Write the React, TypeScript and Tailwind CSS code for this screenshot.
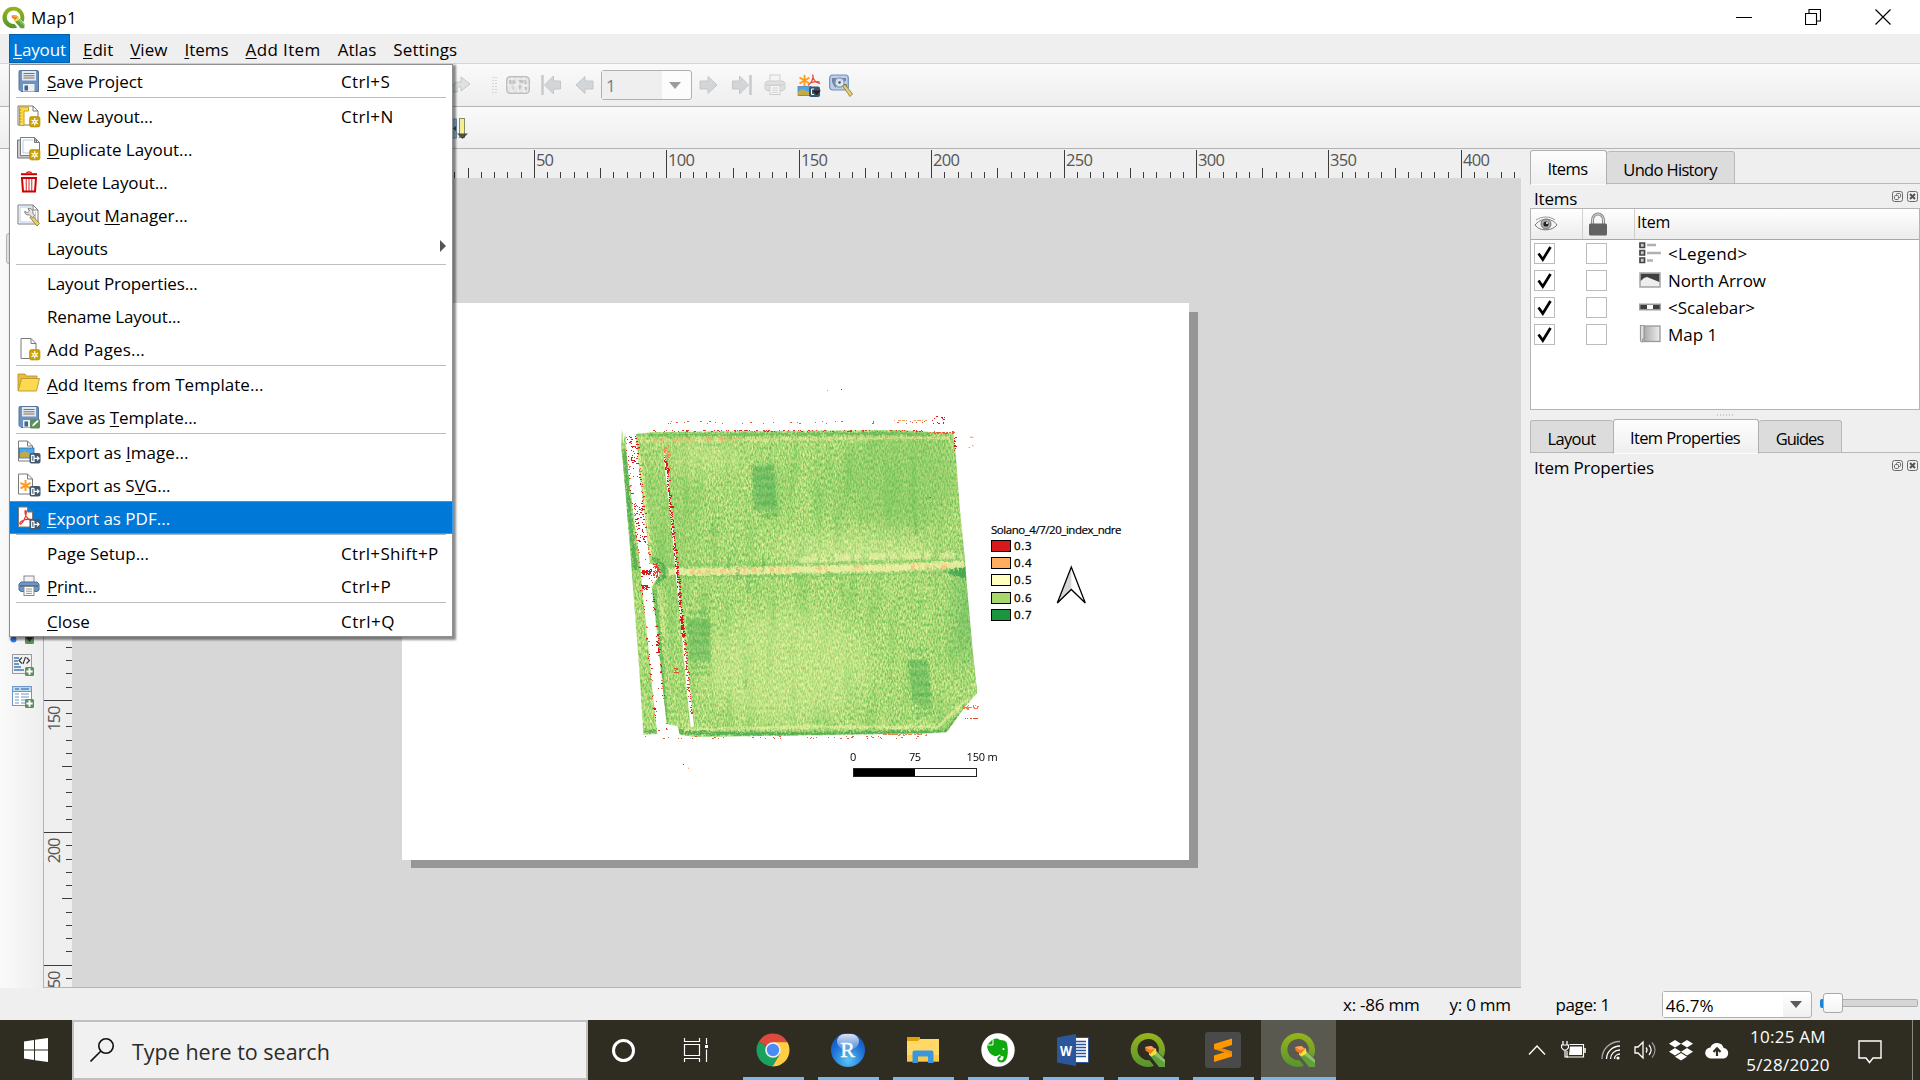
import React, { useLayoutEffect, useRef, useState } from "react";

/* ---------- text helpers ---------- */

/** Text tracked so that it spans `w` pixels. An ampersand marks the mnemonic letter. */
function Label({ t, w, className = "" }: { t: string; w: number; className?: string }) {
  const ref = useRef<HTMLSpanElement>(null);
  const [ls, setLs] = useState(0);
  useLayoutEffect(() => {
    if (ref.current) {
      const n = t.replace("&", "").length;
      setLs((w - ref.current.offsetWidth) / n);
    }
  }, [t, w]);
  const i = t.indexOf("&");
  return (
    <span ref={ref} className={"inline-block whitespace-pre " + className} style={{ letterSpacing: ls + "px" }}>
      {i < 0 ? (
        t
      ) : (
        <>
          {t.slice(0, i)}
          <span className="underline decoration-1 underline-offset-[2px]">{t[i + 1]}</span>
          {t.slice(i + 2)}
        </>
      )}
    </span>
  );
}

function rng(seed: number) {
  let s = seed;
  return () => {
    s = (s * 1664525 + 1013904223) % 4294967296;
    return s / 4294967296;
  };
}

/* ---------- icons ---------- */

type Kid = { children?: React.ReactNode; w?: number; h?: number; vb?: string; className?: string };
const Svg = ({ children, w = 24, h = 24, vb, className = "" }: Kid) => (
  <svg width={w} height={h} viewBox={vb ?? `0 0 ${w} ${h}`} className={"block shrink-0 " + className} fill="none">
    {children}
  </svg>
);

const NewBadge = () => (
  <g>
    <rect x="12.500" y="12.500" width="10.500" height="10.500" rx="2" fill="#c9a20a" stroke="#b08d00" strokeWidth=".6" />
    <path d="M17.700 14v7.600M14.500 15.900l6.500 3.800M21 15.900l-6.500 3.800" stroke="#fff" strokeWidth="1.200" />
    <circle cx="17.700" cy="17.800" r="1.900" fill="#fff" />
    <circle cx="17.700" cy="17.800" r=".7" fill="#c9a20a" />
  </g>
);
const ExportBadge = () => (
  <g>
    <rect x="12.500" y="13" width="11" height="10.500" rx="2" fill="#415a70" />
    <path d="M17 15.300h-2.300v6H17V15.300M17 18.300h5M20 16.300l2 2-2 2" stroke="#fff" strokeWidth="1.200" />
  </g>
);
const Sheet = ({ x = 1, y = 2, w = 20, h = 19 }: { x?: number; y?: number; w?: number; h?: number }) => (
  <path
    d={`M${x} ${y}h${w - 5}l5 5v${h - 5}h-${w}zM${x + w - 5} ${y}v5h5`}
    fill="#fff"
    stroke="#7a7a7a"
    strokeWidth="1"
  />
);
const Floppy = () => (
  <g>
    <path d="M3 1.500h17a1.500 1.500 0 0 1 1.500 1.500v19.500H4L2 20.500V2.500a1 1 0 0 1 1-1z" fill="#6d92c0" stroke="#53759f" />
    <rect x="5" y="2" width="14" height="9.500" fill="#e9e9e9" />
    <path d="M6.500 4.500h11M6.500 6.800h11M6.500 9h11" stroke="#666" strokeWidth=".9" />
    <rect x="6" y="15" width="11.500" height="7.500" fill="#eee" />
    <rect x="7.500" y="16.500" width="3.500" height="5" fill="#3d6396" />
  </g>
);
const Printer = ({ dim = false }: { dim?: boolean }) => (
  <g opacity={dim ? 0.35 : 1}>
    <rect x="7" y="2" width="10" height="7" fill="#f4f4f4" stroke="#888" />
    <path d="M4 8h16l2 2v6l-2 1.500H4L2 16v-6z" fill={dim ? "#bbb" : "#6d97c6"} stroke={dim ? "#888" : "#4b6f99"} />
    <path d="M3 12h18" stroke={dim ? "#999" : "#4f6680"} strokeWidth="1.500" />
    <rect x="7" y="12.500" width="10" height="9" fill="#fff" stroke="#888" />
    <path d="M9 15h6M9 17.200h6M9 19.400h6" stroke="#888" strokeWidth=".9" />
  </g>
);
const Wrench = () => (
  <g>
    <path d="M15 12l7.500 8.500-2.500 2.500-7-8.500z" fill="#e6cf72" stroke="#82712b" strokeWidth=".8" />
    <path
      d="M11 5.500c3-.8 5.500 1.500 4.800 4.500l2 2.800-2.500 2-2.800-3c-3 .8-5-1-4.700-3.500l2.700 1.500 2-1.800z"
      fill="#e4e4e4"
      stroke="#666"
      strokeWidth=".8"
    />
  </g>
);
const Pdf = () => (
  <path d="M8 5c.5-1 1.600-.5 1.400 1.500C9 11 6 17 3.800 18c-1.500.5-1.300-1.500.7-2.700 3-1.800 7-2.500 9.800-1.900 2 .6.800 1.900-.8 1.200C10.500 13.200 7.500 9 8 5z" stroke="#e2382c" strokeWidth="1.200" />
);

const menuIcon: Record<string, React.ReactNode> = {
  save: <Floppy />,
  new: (
    <g>
      <Sheet />
      <path d="M2.500 3h9v4h-4.500v14.500H2.500z" fill="#fcd94e" stroke="#c9a20a" />
      <path d="M2.500 9h2M2.500 12h2M2.500 15h2M2.500 18h2M2.500 6h2" stroke="#a58200" strokeWidth=".8" />
      <NewBadge />
    </g>
  ),
  dup: (
    <g>
      <path d="M.5 3v18h19V3z" fill="#c9c9c9" stroke="#777" />
      <Sheet x={3.5} y={0.5} w={19} h={18} />
      <path d="M6 3v13h14M6 3h10" stroke="#b9cbe8" />
      <NewBadge />
    </g>
  ),
  del: (
    <g stroke="#cf0000" strokeWidth="1.600">
      <path d="M4 4.200h16" strokeWidth="2" />
      <path d="M9.500 3c.5-1.500 4.500-1.500 5 0" strokeWidth="1.200" />
      <path d="M5 8h14l-1 13.500H6z" fill="#fff" strokeWidth="2" />
      <path d="M9.300 9v12M12 9v12M14.700 9v12" strokeWidth="1.300" opacity=".65" />
    </g>
  ),
  mgr: (
    <g>
      <Sheet />
      <path d="M3 4h12.500M3 4v15h14M18.500 9v10" stroke="#b9cbe8" />
      <Wrench />
    </g>
  ),
  pages: (
    <g>
      <Sheet x={4} y={1.5} w={15} h={20} />
      <NewBadge />
    </g>
  ),
  folder: (
    <g stroke="#b99732" strokeWidth=".9">
      <path d="M1 18.500V2h7l1.500 2H20v4" fill="#e9bb3a" />
      <path d="M4.500 6.500h18l-3 12.500H1.200z" fill="#fcd94e" />
    </g>
  ),
  savet: (
    <g>
      <Floppy />
      <rect x="13" y="14" width="10" height="9.500" rx="1.500" fill="#5b8f5c" />
      <path d="M15 21.500l1-2.500 4.500-4 1.200 1.200-4.400 4.300z" fill="#fff" />
    </g>
  ),
  img: (
    <g>
      <Sheet x={1.5} y={1} w={14} h={20} />
      <rect x="2.500" y="8" width="14.500" height="10" fill="#4aa8e8" stroke="#3b6a98" strokeWidth=".8" />
      <path d="M3 17.500v-4l4.500-2.500 9 4v2.500z" fill="#c2ab47" />
      <ExportBadge />
    </g>
  ),
  svg: (
    <g>
      <Sheet x={1.5} y={1} w={14} h={20} />
      <path d="M8.500 7v11M3.500 9.800l10 5.500M13.500 9.800L3.500 15.300" stroke="#ff9a1c" strokeWidth="1.900" />
      <ExportBadge />
    </g>
  ),
  pdf: (
    <g>
      <Sheet x={1.5} y={1} w={14} h={20} />
      <Pdf />
      <ExportBadge />
    </g>
  ),
  print: <Printer />,
};

function Qgis({ s }: { s: number }) {
  return (
    <Svg w={s} h={s} vb="0 0 36 36">
      <defs>
        <linearGradient id="qg" x1="0" y1="0" x2="0" y2="1">
          <stop offset="0" stopColor="#97b51c" />
          <stop offset="1" stopColor="#57932f" />
        </linearGradient>
      </defs>
      <path d="M18 1A17 17 0 1 0 24 33.800L19.500 28.200A10.700 10.700 0 1 1 28.400 20.500L33.300 25.500A17 17 0 0 0 18 1z" fill="url(#qg)" />
      <path d="M19 22.500l5.500-5L35 28v7h-6z" fill="#62a03a" />
      <path d="M24.500 17.500L35 28v3L21 20.500z" fill="#8cc069" />
      <path d="M19 17v5.500l2.500 2 5-3-.5-5z" fill="#f7e13d" />
      <path d="M15 15l6.500-1 3.500 3-4.500 5-5-3.500z" fill="#ef7a22" />
      <path d="M15 15l6.500-1 3.500 3-5 1z" fill="#f9a65a" />
    </Svg>
  );
}

/* ---------- menu ---------- */

type Row = { t: string; w: number; i?: string; k?: string; kw?: number; sep?: boolean; on?: boolean; sub?: boolean };
const rows: Row[] = [
  { t: "&Save Project", w: 96, i: "save", k: "Ctrl+S", kw: 49, sep: true },
  { t: "New Layout...", w: 106, i: "new", k: "Ctrl+N", kw: 53 },
  { t: "&Duplicate Layout...", w: 145, i: "dup" },
  { t: "Delete Layout...", w: 121, i: "del" },
  { t: "Layout &Manager...", w: 141, i: "mgr" },
  { t: "Layouts", w: 61, sub: true, sep: true },
  { t: "Layout Properties...", w: 151 },
  { t: "Rename Layout...", w: 134 },
  { t: "Add Pages...", w: 98, i: "pages", sep: true },
  { t: "&Add Items from Template...", w: 216, i: "folder" },
  { t: "Save as &Template...", w: 150, i: "savet", sep: true },
  { t: "Export as &Image...", w: 141, i: "img" },
  { t: "Export as S&VG...", w: 124, i: "svg" },
  { t: "&Export as PDF...", w: 123, i: "pdf", on: true, sep: true },
  { t: "Pa&ge Setup...", w: 102, k: "Ctrl+Shift+P", kw: 98 },
  { t: "&Print...", w: 49, i: "print", k: "Ctrl+P", kw: 50, sep: true },
  { t: "&Close", w: 43, k: "Ctrl+Q", kw: 54 },
];

function Menu() {
  return (
    <div className="absolute left-[9px] top-[64px] z-20 w-[444px] bg-white shadow-[inset_0_0_0_1px_#8f8f8f,2px_2px_2px_1px_rgba(0,0,0,0.45)]">
      {rows.map((r) => (
        <React.Fragment key={r.t}>
          <div
            className={
              "flex h-[33px] items-center pl-[8px] " + (r.on ? "bg-[#0078d7] text-white shadow-[inset_0_0_0_1px_#3399ea]" : "text-black")
            }
          >
            <div className="w-6 shrink-0 pt-px">{r.i && <Svg>{menuIcon[r.i]}</Svg>}</div>
            <div className="w-[294px] shrink-0 pl-[6px] pt-[3px]">
              <Label t={r.t} w={r.w} />
            </div>
            <div className="w-[104px] shrink-0 pl-[6px] pt-[3px]">{r.k && <Label t={r.k} w={r.kw!} />}</div>
            {r.sub && (
              <Svg w={6} h={12} className="ml-px -mt-1">
                <path d="M0 0l6 6-6 6z" fill="#555" />
              </Svg>
            )}
          </div>
          {r.sep && <div className={"mx-[7px] mb-px h-px " + (r.on ? "bg-[#a9b7c4]" : "bg-[#bdbdbd]")} />}
        </React.Fragment>
      ))}
    </div>
  );
}

const menuBar: [string, number][] = [
  ["&Edit", 30],
  ["&View", 37],
  ["&Items", 44],
  ["&Add Item", 75],
  ["Atlas", 39],
  ["Settings", 64],
];

/* ---------- toolbars ---------- */

const Arrow = ({ flip = false, bar = false }: { flip?: boolean; bar?: boolean }) => (
  <Svg w={20} h={20} className={flip ? "-scale-x-100" : ""}>
    <path d={bar ? "M.5 6h7V1l9 9-9 9v-5h-7z" : "M1 6h8V1.500l9 8.500-9 8.500V14H1z"} fill="#d2d6d8" stroke="#c3c7c9" />
    {bar && <path d="M18.500 0v20" stroke="#c6cacc" strokeWidth="2.500" />}
  </Svg>
);

function Toolbars() {
  return (
    <>
      <div className="flex h-[43px] items-center border-b border-[#b4b4b4] bg-linear-to-b from-[#fafafa] to-[#eeeeee] pl-[452px]">
        <Svg w={20} h={20}>
          <path d="M1 17c-2-6 1-11 8-10V2l9 7-9 7v-4c-4-1-5 1-3 5z" fill="#dfe3df" stroke="#c5c9c5" />
        </Svg>
        <Svg w={5} h={17} className="ml-[20px] mr-[9px]">
          <path d="M1 0v17M4 0v17" stroke="#b5b5b5" strokeDasharray="1 2" />
        </Svg>
        <Svg w={24} h={18}>
          <rect x=".7" y=".7" width="22.600" height="16.600" rx="3.500" fill="#e6e6e6" stroke="#bdbdbd" strokeWidth="1.400" />
          <path d="M3 4h5l2 2-3 3 1 5-2-1-1-4-2-2zM12 4l8 0 1 4-3 1-1-2-3 0zM12 8l4 1-2 5-2-3zM18 11l3 0v3h-2z" fill="#c2c2c2" />
          <path d="M6 1v16M12 1v16M18 1v16M1 9h22" stroke="#fff" strokeWidth=".6" />
        </Svg>
        <div className="ml-[11px]"><Arrow flip bar /></div>
        <div className="ml-[13px]"><Arrow flip /></div>
        <div className="ml-[7px] flex h-[30px] w-[91px] items-center rounded-[3px] border border-[#b0b0b0] bg-[#fcfcfc]">
          <div className="flex h-full w-[60px] items-center bg-[#efefef] pl-[4px] pt-[2px] text-[#6f7d8c]">1</div>
          <Svg w={12} h={7} className="ml-[7px]">
            <path d="M0 0h12l-6 7z" fill="#9c9c9c" />
          </Svg>
        </div>
        <div className="ml-[7px]"><Arrow /></div>
        <div className="ml-[13px]"><Arrow bar /></div>
        <Svg className="ml-[11px]"><Printer dim /></Svg>
        <Svg className="ml-[10px] mt-[2px]" w={24} h={24}>
          <path d="M7.500 1v11M2.500 3.500l10 6M12.500 3.500l-10 6" stroke="#ff9a1c" strokeWidth="1.800" />
          <path d="M15 1.500c.8-.8 1.300 0 1 1.500-.5 3-3 7-5 8.500M16 3c.5 3 3 5.500 7 6.500M12.500 9.500c2.500-1.500 6-2.200 10-1.500" stroke="#ee4a38" strokeWidth="1.300" />
          <rect x="1" y="12.500" width="13" height="9" fill="#4aa8e8" stroke="#3b6a98" strokeWidth=".6" />
          <path d="M1 21v-3.500l4-2.500 9 4v2z" fill="#c2ab47" />
          <rect x="12" y="12.500" width="11" height="10.500" rx="2" fill="#3b556d" />
          <path d="M17 15h-2.500v5.500H17" stroke="#fff" />
          <path d="M15.500 16.500h8.500L19.700 21z" fill="#222" />
        </Svg>
        <Svg className="ml-[8px] mt-[2px]" w={24} h={24}>
          <rect x=".7" y="1" width="18.600" height="15" rx="3" fill="#bcd0ea" stroke="#6f8fbb" strokeWidth="1.200" />
          <path d="M3 4h4l2 2-2 4 0 4-2-2-2-4zM10 4h7v3l-3 0-3 1zM14 10l4 0v3l-2 1z" fill="#6f86a6" />
          <circle cx="10.500" cy="8.500" r="4.600" fill="#e6eef8" fillOpacity=".8" stroke="#8b96a6" strokeWidth="1.200" />
          <circle cx="10.500" cy="8.500" r="1.300" fill="#456" />
          <path d="M13.700 12l2.300-1.500 7.500 9.500-2.500 2.500z" fill="#e6cf72" stroke="#82712b" strokeWidth=".8" />
        </Svg>
      </div>
      <div className="flex h-[42px] items-center border-b border-[#b4b4b4] bg-linear-to-b from-[#fafafa] to-[#eeeeee] pl-[452px]">
        <Svg w={18} h={22} className="mt-[2px]">
          <rect x="-2" y="1" width="6.500" height="19" fill="#9dbdd6" stroke="#6d96b8" />
          <path d="M4 8l-3 2.500L4 13z" fill="#444" />
          <rect x="7.500" y=".5" width="5" height="19" fill="#f3ee8e" stroke="#8a8a6a" />
          <path d="M5 15.500h11l-5.500 5.500z" fill="#333" fillOpacity=".85" />
        </Svg>
      </div>
    </>
  );
}

/* ---------- rulers ---------- */

const MM = 2.6485;

function TopRuler() {
  const ticks: React.ReactNode[] = [];
  for (let mm = 0; mm <= 420; mm += 5) {
    const x = Math.floor(402 + mm * MM) + 0.5 - 72;
    const top = mm % 50 === 0 ? 1 : mm % 25 === 0 ? 19 : 23;
    ticks.push(<path key={mm} d={`M${x} ${top}V29`} stroke="#3c3c3c" />);
    if (mm % 50 === 0)
      ticks.push(
        <text key={"t" + mm} x={x + 1.5} y="17" fontSize="16.500" textLength={String(mm).length * 9} fill="#555">
          {mm}
        </text>
      );
  }
  return <Svg w={1449} h={29}>{ticks}</Svg>;
}

function SideRuler() {
  const ticks: React.ReactNode[] = [];
  for (let mm = 0; mm <= 255; mm += 5) {
    const y = Math.floor(303 + mm * MM) + 0.5 - 178;
    const left = mm % 50 === 0 ? 0 : mm % 25 === 0 ? 18 : 22;
    ticks.push(<path key={mm} d={`M${left} ${y}H28`} stroke="#3c3c3c" />);
    if (mm % 50 === 0) {
      const l = String(mm).length * 8.6;
      ticks.push(
        <text key={"t" + mm} transform={`translate(16 ${y + 5 + l}) rotate(-90)`} fontSize="16.500" textLength={l} fill="#555">
          {mm}
        </text>
      );
    }
  }
  return <Svg w={28} h={809}>{ticks}</Svg>;
}

/* ---------- map ---------- */

function speckle(seed: number, n: number, at: (r: () => number) => [number, number]) {
  const r = rng(seed);
  let d = "";
  for (let i = 0; i < n; i++) {
    const [x, y] = at(r);
    const w = r() < 0.3 ? 6 : 3;
    d += `M${Math.round(x / 3) * 3} ${Math.round(y / 3) * 3}h${w}v3h-${w}z`;
  }
  return d;
}

const road = (r: () => number, y0: number, y1: number): [number, number] => {
  const y = y0 + r() * (y1 - y0);
  const left = 78 + (y - 190) * 0.105;
  return [left + r() * 28, y];
};
const lane = (r: () => number, y0: number, y1: number, s = 9): [number, number] => {
  const y = y0 + r() * (y1 - y0);
  return [188 + (y - 230) * 0.1 + r() * s, y];
};
const edge = (r: () => number): [number, number] => {
  const y = 200 + r() * 880;
  return [(r() < 0.5 ? 72 : 104) + (y - 190) * 0.105 + r() * 6, y];
};

function FieldMap() {
  const main =
    "M108 192L160 186L480 183L900 180L990 186L1060 190L1066 240L1080 420L1094 560L1100 640L1118 840L1132 968L1095 1010L1040 1086L980 1090L620 1096L285 1101L240 1094L232 1068L200 1062L186 930L170 780L155 650L178 615L176 590L150 580L135 440L118 300Z";
  const strip = "M66 178L70 215L76 192L84 300L100 430L112 520L122 600L130 690L146 840L160 990L172 1092L130 1094L118 900L104 720L92 560L74 340L63 225Z";
  return (
    <Svg w={400} h={420} vb="0 0 1200 1260" className="absolute left-[198px] top-[67px]">
      <defs>
        <clipPath id="field">
          <path d={main} />
          <path d={strip} />
        </clipPath>
        <filter id="crop" x="0" y="0" width="100%" height="100%" colorInterpolationFilters="sRGB">
          <feTurbulence type="fractalNoise" baseFrequency="0.22 0.1" numOctaves="2" seed="7" />
          <feColorMatrix values="1 0 0 0 0  1 0 0 0 0  1 0 0 0 0  0 0 0 0 1" />
          <feComponentTransfer>
            <feFuncR type="table" tableValues="0.25 0.36 0.47 0.56 0.68 0.78 0.87 0.96 1" />
            <feFuncG type="table" tableValues="0.65 0.71 0.76 0.81 0.86 0.9 0.94 0.98 1" />
            <feFuncB type="table" tableValues="0.33 0.36 0.38 0.4 0.46 0.54 0.62 0.7 0.75" />
          </feComponentTransfer>
        </filter>
        <filter id="broad" x="0" y="0" width="100%" height="100%" colorInterpolationFilters="sRGB">
          <feTurbulence type="fractalNoise" baseFrequency="0.03 0.004" numOctaves="3" seed="21" />
          <feColorMatrix values="0 0 0 0 0.38  0 0 0 0 0.74  0 0 0 0 0.33  2 0 0 0 -0.95" />
        </filter>
        <filter id="rough" x="-10%" y="-10%" width="120%" height="120%">
          <feTurbulence type="fractalNoise" baseFrequency="0.14" numOctaves="2" seed="3" result="n" />
          <feDisplacementMap in="SourceGraphic" in2="n" scale="20" xChannelSelector="R" yChannelSelector="G" />
        </filter>
        <filter id="soft" x="-60%" y="-60%" width="220%" height="220%">
          <feGaussianBlur stdDeviation="34" />
        </filter>
      </defs>
      <g clipPath="url(#field)">
        <rect x="50" y="170" width="1100" height="940" filter="url(#crop)" />
        <rect x="50" y="170" width="1100" height="940" filter="url(#broad)" opacity=".5" />
        <g filter="url(#soft)">
          <ellipse cx="560" cy="890" rx="250" ry="170" fill="#f2f7a8" opacity=".3" />
          <ellipse cx="760" cy="540" rx="260" ry="35" fill="#f6f8b0" opacity=".4" />
          <ellipse cx="900" cy="330" rx="190" ry="150" fill="#6bbd56" opacity=".35" />
          <ellipse cx="200" cy="480" rx="90" ry="200" fill="#7cc45c" opacity=".3" />
          <ellipse cx="1110" cy="700" rx="40" ry="190" fill="#3ba64e" opacity=".45" />
          <ellipse cx="320" cy="260" rx="110" ry="50" fill="#e8f3a0" opacity=".3" />
        </g>
        <g filter="url(#rough)">
          <path d="M150 195L900 190L990 196" stroke="#5fb455" strokeWidth="7" opacity=".8" />
          <path d="M120 212L440 208L1050 202" stroke="#f6e59c" strokeWidth="6" opacity=".75" />
          <path d="M160 211L440 207" stroke="#f2a45e" strokeWidth="4" strokeDasharray="40 14 70 20" opacity=".8" />
          <path d="M190 586L700 580L1090 568" stroke="#69b957" strokeWidth="5" opacity=".55" />
          <path d="M205 606L560 600L860 594L1092 582" stroke="#fbf3ae" strokeWidth="20" opacity=".75" />
          <path d="M600 572L800 558L1090 558" stroke="#f8f5b0" strokeWidth="20" strokeDasharray="50 12 20 22" opacity=".5" />
          <path d="M270 606L480 600M510 599L580 598M650 596L690 595M760 593L790 592M930 592L1040 589" stroke="#f9b672" strokeWidth="12" strokeDasharray="15 9 8 14" opacity=".7" />
          <path d="M180 620L600 618L1000 608L1098 598" stroke="#5fb455" strokeWidth="5" opacity=".55" />
          <path d="M1040 606L1100 590L1104 630z" fill="#2f9c49" opacity=".7" />
          <path d="M245 1089L620 1092L1035 1086L1132 981" stroke="#3fa54c" strokeWidth="10" opacity=".8" />
          <path d="M250 1078L640 1071L1010 1071L1100 990" stroke="#f4f2a6" strokeWidth="8" opacity=".65" />
          <path d="M73 240L93 480L107 600" stroke="#37a04b" strokeWidth="13" opacity=".65" />
          <path d="M117 250L135 400L153 560" stroke="#f5f0a6" strokeWidth="8" opacity=".8" />
          <path d="M163 660L181 820L199 1050" stroke="#5cb155" strokeWidth="9" opacity=".8" />
          <path d="M179 660L193 800" stroke="#ecef9f" strokeWidth="5" opacity=".7" />
          <path d="M155 560L188 585L193 620L168 640" stroke="#37a04b" strokeWidth="9" opacity=".7" />
          <path d="M130 1084H172M243 1074L239 1096" stroke="#37a04b" strokeWidth="9" opacity=".7" />
          <path d="M386 540V600M445 610V670M414 590V630M490 560V610M947 440V490M782 430V460M435 930V950M338 460V500M684 600V630" stroke="#3fa54c" strokeWidth="5" opacity=".5" />
        </g>
        <g filter="url(#rough)" fill="#4bab52" stroke="#4bab52">
          <path d="M455 288L521 284L529 420L461 422Z" opacity=".45" />
          <path d="M460 300L522 296M462 325L524 322M464 350L526 347M466 376L528 373M468 400L528 398" strokeWidth="9" opacity=".4" />
          <path d="M477 438L531 434" strokeWidth="9" opacity=".5" />
          <path d="M259 746L331 744L333 876L269 878Z" opacity=".4" />
          <path d="M262 765H330M264 790H330M266 815H330M268 850H330" strokeWidth="9" opacity=".35" />
          <path d="M265 726H321M273 892L333 890M277 911L331 909" strokeWidth="8" opacity=".4" />
          <path d="M925 870L983 868L995 1006L939 1002Z" opacity=".42" />
          <path d="M928 885L985 882M932 915L988 912M936 945L990 942M938 975L994 972" strokeWidth="9" opacity=".4" />
          <path d="M921 844L981 840M947 1016L999 1012M943 1032L1003 1030" strokeWidth="8" opacity=".42" />
        </g>
      </g>
      <path d="M190 232L202 300L232 600L248 780L260 860L282 1070H272L260 960L246 800L226 600L212 440L196 310Z" fill="#fff" />
      <path d={speckle(5, 60, (r) => lane(r, 225, 300, 18))} fill="#f08a50" />
      <path d={speckle(11, 260, (r) => lane(r, 260, 800, 9))} fill="#d7191c" />
      <path d={speckle(13, 60, (r) => lane(r, 740, 800, 7))} fill="#d7191c" />
      <path d={speckle(14, 70, (r) => lane(r, 800, 1050, 10))} fill="#da3a2c" />
      <path d={speckle(21, 34, (r) => road(r, 190, 300))} fill="#d7191c" />
      <path d={speckle(22, 55, (r) => road(r, 400, 520))} fill="#d7191c" />
      <path d={speckle(23, 25, (r) => road(r, 190, 1080))} fill="#dd4030" />
      <path d={speckle(24, 110, edge)} fill="#ee7040" />
      <path d={speckle(25, 80, edge)} fill="#d7191c" />
      <path d={speckle(26, 50, (r) => [124 + r() * 26, 598 + r() * 14])} fill="#d7191c" />
      <path d={speckle(27, 50, (r) => [158 + r() * 18, 580 + r() * 42])} fill="#e0402c" />
      <path d={speckle(28, 34, (r) => [122 + r() * 20, 644 + r() * 12])} fill="#d7191c" />
      <path d={speckle(29, 30, (r) => [166 + r() * 8 + 2, 790 + r() * 60])} fill="#d7191c" />
      <path d={speckle(30, 90, (r) => [150 + r() * 830, 179 + r() * 4])} fill="#dc3a28" />
      <path d={speckle(31, 34, (r) => [110 + r() * 870, 152 + r() * 8])} fill="#e5603c" />
      <path d={speckle(32, 20, (r) => [880 + r() * 100, 150])} fill="#f3a060" />
      <path d={speckle(33, 12, (r) => [990 + r() * 44, 136 + r() * 26])} fill="#d7191c" />
      <path d={speckle(34, 34, (r) => [990 + r() * 70, 184 + r() * 5])} fill="#e5603c" />
      <path d={speckle(35, 44, (r) => [130 + r() * 850, 1097 + r() * 8])} fill="#e5603c" />
      <path d={speckle(36, 50, (r) => [850 + r() * 130, 1090 + r() * 4])} fill="#e88a50" />
      <path d={speckle(37, 34, (r) => [1085 + r() * 46, 1004 + r() * 14])} fill="#f08048" />
      <path d={speckle(38, 18, (r) => [1092 + r() * 40, 1044])} fill="#e2512f" />
      <path d={speckle(39, 16, (r) => [1062 + r() * 4, 200 + r() * 50])} fill="#d7191c" />
      <path d={speckle(40, 14, (r) => [220 + r() * 12, 892 + r() * 16])} fill="#e2512f" />
      <path d="M681 60h3v3h-3zM1110 200h10v3h-10zM1106 231h4v3h-4zM1116 226h5v3h-5zM264 1193h3v3h-3z" fill="#f0955c" />
      <path d="M723 57h3v3h-3zM249 1182h3v3h-3zM990 381h3v3h-3z" fill="#d7191c" />
    </Svg>
  );
}

const legend: [string, string][] = [
  ["0.3", "bg-[#d7191c]"],
  ["0.4", "bg-[#fdae61]"],
  ["0.5", "bg-[#ffffc0]"],
  ["0.6", "bg-[#a6d96a]"],
  ["0.7", "bg-[#1a9641]"],
];

function Canvas() {
  return (
    <div className="relative h-[809px] w-[1449px] overflow-hidden bg-[#d7d7d7]">
      <div className="absolute left-[339px] top-[134px] h-[556px] w-[787px] bg-[#969696]" />
      <div className="absolute left-[330px] top-[125px] h-[557px] w-[787px] bg-white">
        <FieldMap />
        <div className="absolute left-[589px] top-[219px] text-[11.500px] leading-[16px] text-black">
          <Label t="Solano_4/7/20_index_ndre" w={130} className="[-webkit-text-stroke:0.2px_black]" />
          {legend.map(([t, c]) => (
            <div key={t} className="-mt-[0.500px] mb-[0.500px] flex h-[17.200px] items-center gap-[3px]">
              <div className={"h-[12px] w-[20px] border border-black " + c} />
              <Label t={t} w={18} className="[-webkit-text-stroke:0.3px_black]" />
            </div>
          ))}
        </div>
        <Svg w={34} h={44} className="absolute left-[652px] top-[260px]">
          <path d="M17.300 4L3.300 40L17.300 26.500z" fill="#d6d6d6" />
          <path d="M17.300 4L3.300 40L17.300 26.500L31.300 40z" stroke="#000" strokeWidth="1.300" />
        </Svg>
        <div className="absolute left-[451px] top-[446px] w-[150px] text-[11px] leading-[16px] text-black">
          <div className="flex">
            <span className="w-[5px] -ml-[3px] mr-[54px]">0</span>
            <Label t="75" w={12} />
            <Label t="150 m" w={31} className="ml-[46px]" />
          </div>
          <div className="mt-[3px] flex h-[9px] w-[124px] border border-[#222] bg-white">
            <div className="w-1/2 bg-black" />
          </div>
        </div>
      </div>
    </div>
  );
}

/* ---------- left tools ---------- */

const Plus = () => (
  <g>
    <rect x="13" y="13" width="9" height="9" rx="1.500" fill="#5b8f5c" />
    <path d="M17.500 14.300v6.400M14.300 17.500h6.400" stroke="#fff" strokeWidth="2" />
  </g>
);

function LeftTools() {
  return (
    <div className="relative h-[839px] w-[43px] bg-linear-to-r from-[#fafafa] to-[#eeeeee]">
      <div className="absolute left-[6px] top-[84px] h-[31px] w-[31px] rounded-[3px] border border-[#b0b0b0] bg-[#e2e2e2]" />
      <div className="flex flex-col pl-[12px] pt-[475px]">
        <Svg w={22} h={22} className="overflow-visible">
          <circle cx="1.500" cy="15.500" r="3" fill="#2a7fff" />
          <path d="M2 14l5-4" stroke="#555" />
          <rect x="13" y="11" width="9" height="9" rx="1.500" fill="#5b8f5c" />
          <path d="M13 12h9l-4.500 6z" fill="#333" />
        </Svg>
        <Svg w={22} h={22} className="mt-[8px]">
          <rect x=".5" y=".5" width="19" height="19" fill="#f1f1f1" stroke="#9a9a9a" />
          <path d="M2 4h5M2 7h4M2 10h5M2 13h7M2 16h10" stroke="#6d97c6" strokeWidth="2" />
          <path d="M10 3.500L7 6.500l3 3M14.500 3.500l3 3-3 3M13.500 3l-2.500 7" stroke="#333" strokeWidth="1.100" />
          <Plus />
        </Svg>
        <Svg w={22} h={22} className="mt-[10px]">
          <rect x=".5" y=".5" width="19" height="19" fill="#fff" stroke="#6d97c6" />
          <rect x="1" y="1" width="18" height="4.500" fill="#b9d9f0" />
          <path d="M3 3h4M9 3h8" stroke="#5a86b8" strokeWidth="1.500" />
          <path d="M1 5.500h18M3 8h4M9 8h8M3 11h4M9 11h8M3 14h4M9 14h5M3 17h4M9 17h4" stroke="#6d97c6" />
          <Plus />
        </Svg>
      </div>
    </div>
  );
}

/* ---------- right panel ---------- */

function Tab({ t, w, box, active = false }: { t: string; w: number; box: string; active?: boolean }) {
  return (
    <div
      className={
        "flex items-center justify-center rounded-t-[3px] border " +
        box +
        (active
          ? " h-[35px] border-[#b0b0b0] border-b-transparent bg-linear-to-b from-[#fdfdfd] to-[#efefef] pt-[3px] pr-[2px]"
          : " h-[33px] border-[#b8b8b8] bg-[#dcdcdc] pt-[5px] pr-px")
      }
    >
      <Label t={t} w={w} className="text-[16.500px]" />
    </div>
  );
}

function DockTitle({ t, w }: { t: string; w: number }) {
  return (
    <div className="flex h-[23px] items-center justify-between pl-[4px] pr-[2px]">
      <Label t={t} w={w} className="mt-[3px]" />
      <div className="-mt-[2px] flex gap-[4px]">
        <Svg w={11} h={11}>
          <rect x=".5" y=".5" width="10" height="10" rx="2" stroke="#6a6a6a" />
          <rect x="4.500" y="2.500" width="4" height="4" rx="1" stroke="#6a6a6a" />
          <rect x="2.500" y="4.500" width="4" height="4" rx="1" fill="#efefef" stroke="#6a6a6a" />
        </Svg>
        <Svg w={11} h={11}>
          <rect x=".5" y=".5" width="10" height="10" rx="2" stroke="#6a6a6a" />
          <path d="M3 3l5 5M8 3l-5 5" stroke="#555" strokeWidth="2" />
        </Svg>
      </div>
    </div>
  );
}

const Box = ({ on = false }: { on?: boolean }) => (
  <div className="h-[21px] w-[21px] border border-[#bcbcbc] bg-white">
    {on && (
      <Svg w={19} h={19}>
        <path d="M3.500 9.500l4.300 6L15.500 3" stroke="#000" strokeWidth="2.700" />
      </Svg>
    )}
  </div>
);

const items: [string, number, React.ReactNode][] = [
  [
    "<Legend>",
    79,
    <g>
      <path d="M8 3h9M8 11h14M8 18.500h6" stroke="#b0b0b0" strokeWidth="2.500" />
      <path d="M1 1h4.500v4.500H1zM1 8.500h4.500V13H1zM1 16h4.500v4.500H1z" fill="#ccc" stroke="#444" strokeWidth="1.700" />
    </g>,
  ],
  [
    "North Arrow",
    98,
    <g>
      <rect x="1" y="4" width="20" height="14" fill="#eee" stroke="#a5a5a5" strokeWidth="1.500" />
      <path d="M1.700 4.700h18.600v8.300L8 8l-3 1-3.300 3z" fill="#3f3f3f" />
    </g>,
  ],
  [
    "<Scalebar>",
    87,
    <g>
      <rect x=".7" y="8.200" width="20.600" height="5.600" fill="#3f3f3f" stroke="#a0a0a0" strokeWidth="1.400" />
      <path d="M8 9h6v4H8z" fill="#fff" />
    </g>,
  ],
  [
    "Map 1",
    49,
    <g>
      <defs>
        <linearGradient id="mp">
          <stop offset="0" stopColor="#aaa" />
          <stop offset="1" stopColor="#eee" />
        </linearGradient>
      </defs>
      <rect x="5" y="3" width="16" height="15.500" fill="url(#mp)" stroke="#999" strokeWidth="1.300" />
      <path d="M1.500 2.500h3.500v13c-2 0-2 3 0 3-3 1-3.500 0-3.500-2z" fill="#e2e2e2" stroke="#999" strokeWidth="1.200" />
    </g>,
  ],
];

function RightPanel() {
  return (
    <div className="w-[390px] text-black">
      <div className="flex h-[37px] items-end pt-[1px]">
        <Tab t="Items" w={40} box="w-[77px] mb-px" active />
        <Tab t="Undo History" w={93} box="w-[128px] mb-[2px] border-l-0" />
        <div className="mb-[2px] h-px flex-1 bg-[#b8b8b8]" />
      </div>
      <DockTitle t="Items" w={43} />
      <div className="-mt-px h-[202px] border border-[#b4b4b4] bg-white">
        <div className="flex h-[31px] border-b border-[#a8a8a8] bg-linear-to-b from-white to-[#ececec]">
          <div className="flex w-[52px] items-center border-r border-[#cfcfcf] pl-[3px]">
            <Svg w={24} h={18}>
              <path d="M1 10c5-7 17-8 22 0-5 6-17 7-22 0z" fill="#f4f4f4" stroke="#777" />
              <path d="M2 5C8 1 16 1 21 5" stroke="#999" />
              <circle cx="12" cy="9" r="5" fill="#aaa" stroke="#777" />
              <circle cx="12" cy="9" r="2.600" fill="#222" />
              <circle cx="13" cy="8" r="1" fill="#fff" />
            </Svg>
          </div>
          <div className="flex w-[52px] items-center border-r border-[#cfcfcf] pl-[5px]">
            <Svg w={20} h={24}>
              <path d="M4.500 12V8a5.500 6 0 0 1 11 0v4" stroke="#8c8c8c" strokeWidth="3" />
              <path d="M4.500 12V8a5.500 6 0 0 1 11 0v4" stroke="#ddd" strokeWidth="1" />
              <rect x="1" y="11.500" width="18" height="12" rx="1.500" fill="#636363" />
            </Svg>
          </div>
          <Label t="Item" w={33} className="ml-[2px] mt-px text-[16px]" />
        </div>
        <div>
          {items.map(([t, w, icon]) => (
            <div key={t} className="flex h-[27px] items-center pl-[3px]">
              <Box on />
              <div className="w-[31px]" />
              <Box />
              <Svg w={22} h={22} className="ml-[32px] mr-[7px] -mt-[2px]">{icon}</Svg>
              <Label t={t} w={w} className="pt-px" />
            </div>
          ))}
        </div>
      </div>
      <div className="flex h-[9px] items-center justify-center">
        <Svg w={17} h={2}>
          <path d="M0 1h17" stroke="#aaa" strokeDasharray="1 2" />
        </Svg>
      </div>
      <div className="flex h-[36px] items-end">
        <Tab t="Layout" w={48} box="w-[83px] mb-[2px] border-r-0" />
        <Tab t="Item Properties" w={110} box="w-[146px] mb-px" active />
        <Tab t="Guides" w={48} box="w-[83px] mb-[2px] border-l-0" />
        <div className="mb-[2px] h-px flex-1 bg-[#b8b8b8]" />
      </div>
      <DockTitle t="Item Properties" w={120} />
    </div>
  );
}

/* ---------- status bar ---------- */

function StatusBar() {
  return (
    <div className="flex h-[32px] items-center bg-[#efefef] pl-[1343px] text-black">
      <Label t="x: -86 mm" w={77} className="mt-[2px]" />
      <Label t="y: 0 mm" w={61} className="ml-[30px] mt-[2px]" />
      <Label t="page: 1" w={54} className="ml-[45px] mt-[2px]" />
      <div className="ml-[52px] flex h-[27px] w-[150px] items-center justify-between rounded-[3px] border border-[#b0b0b0] bg-linear-to-b from-white to-[#f0f0f0]">
        <div className="flex h-full w-[120px] items-center bg-white pl-[3px] pt-[3px]">
          <Label t="46.7%" w={48} />
        </div>
        <Svg w={12} h={7} className="mr-[9px]">
          <path d="M0 0h12l-6 7z" fill="#5a5a5a" />
        </Svg>
      </div>
      <div className="ml-[8px] -mt-[2px] flex items-center">
        <div className="h-[9px] w-[4px] rounded-l-[2px] bg-[#1883d7]" />
        <div className="-ml-px h-[20px] w-[20px] rounded-[3px] border border-[#a8a8a8] bg-linear-to-b from-white to-[#f4f4f4]" />
        <div className="h-[8px] w-[75px] rounded-r-[2px] border border-l-0 border-[#adadad] bg-[#d6d6d6]" />
      </div>
    </div>
  );
}

/* ---------- task bar ---------- */

const Chrome = () => (
  <Svg w={34} h={34}>
    <path d="M17 17L2.700 8.700A16.500 16.500 0 0 1 31.400 9z" fill="#db4a3c" />
    <path d="M17 17L2.700 8.700A16.500 16.500 0 0 0 16.500 33.500L24 21z" fill="#1aa15f" />
    <path d="M17 9.200H31.500A16.500 16.500 0 0 1 16.500 33.500L24 21z" fill="#ffce43" />
    <circle cx="17" cy="17" r="7.800" fill="#f1f1f1" />
    <circle cx="17" cy="17" r="6.200" fill="#4c8bf5" />
  </Svg>
);
const RStudio = () => (
  <div className="relative flex h-[34px] w-[34px] items-center justify-center rounded-full bg-[radial-gradient(circle_at_50%_80%,#5cc4f5_0%,#1f74d8_50%,#0e3fae_100%)]">
    <div className="absolute left-[6px] top-[1px] h-[15px] w-[22px] rounded-full bg-linear-to-b from-white/85 to-white/20" />
    <span className="relative font-['Liberation_Serif',serif] text-[22px] leading-none text-white [-webkit-text-stroke:0.4px_white]">R</span>
  </div>
);
const Explorer = () => (
  <Svg w={34} h={34}>
    <path d="M1 4h13v6H1z" fill="#e2a100" />
    <path d="M1 8h11l2-2h19v22.500H1z" fill="#ffd868" />
    <path d="M1 22h32v6.500H1z" fill="#fbc53c" opacity=".7" />
    <path d="M6.500 30V19.500a2 2 0 0 1 2-2h17a2 2 0 0 1 2 2V30h-5.500v-6.500H12V30z" fill="#3a97dd" />
  </Svg>
);
const Evernote = () => (
  <Svg w={34} h={34}>
    <circle cx="17" cy="17" r="16.700" fill="#fff" />
    <path
      d="M6 12.500h5a1.500 1.500 0 0 0 1.500-1.500V6c3-1 5-.5 6.500 1 4 0 6.500 1 7 3.500 1 5 1.200 9 .3 13-1 4-3 6-6 6-2.500 0-4-1.500-4-3.500s1.500-3.300 3.500-3.300v2c-1 0-1.500.6-1.500 1.300s.7 1.300 1.700 1.300c2 0 2.500-1.500 2.500-4-2 0-3.500-.5-4-2-1 1.500-3 2-5 1.700C9 21.500 6.500 18 6 12.500z"
      fill="#0fa80f"
    />
    <path d="M6.500 11.500l5-5v4a1 1 0 0 1-1 1z" fill="#0fa80f" />
    <circle cx="22.500" cy="16" r="1.100" fill="#fff" />
  </Svg>
);
const Word = () => (
  <Svg w={34} h={34}>
    <rect x="16" y="4.500" width="16.500" height="25" rx="1" fill="#fff" stroke="#2b579a" />
    <path d="M20 8.500h10M20 11.500h10M20 14.500h10M20 17.500h10M20 20.500h10M20 23.500h10" stroke="#2b579a" strokeWidth="1.300" />
    <path d="M1 4.500L20 1v32L1 29.500z" fill="#2b579a" />
    <text x="4" y="22.500" fontSize="15" fontWeight="bold" textLength="12" lengthAdjust="spacingAndGlyphs" fill="#fff">W</text>
  </Svg>
);
const Sublime = () => (
  <div className="flex h-[36px] w-[36px] items-center justify-center rounded-[3px] bg-[#4a4a4a]">
    <Svg w={20} h={24}>
      <path d="M1 6L19 .5V7L8.500 10.300 19 13.500V18.500L1 24V17.500L11.500 14.200 1 11z" fill="#ff9800" />
      <path d="M1 11l18 5.500v-3L8.500 10.300z" fill="#f08a00" />
    </Svg>
  </div>
);

const apps: { el: React.ReactNode; on?: boolean }[] = [
  { el: <Chrome /> },
  { el: <RStudio /> },
  { el: <Explorer /> },
  { el: <Evernote /> },
  { el: <Word /> },
  { el: <Qgis s={36} /> },
  { el: <Sublime /> },
  { el: <Qgis s={36} />, on: true },
];

function TaskBar() {
  return (
    <div className="flex h-[60px] bg-[#2f2d22] text-white">
      <div className="flex w-[72px] items-center justify-center">
        <Svg w={24} h={24}>
          <path d="M0 3.400L10 2v9.500H0zM11 1.800L24 0v11.500H11zM0 12.500h10V22L0 20.600zM11 12.500h13V24l-13-1.800z" fill="#fff" />
        </Svg>
      </div>
      <div className="flex w-[516px] items-center border-2 border-[#c0c0c0] bg-[#f1f1f1] pl-[16px] text-[#2b2b2b]">
        <Svg w={24} h={24}>
          <circle cx="16" cy="8" r="7.200" stroke="#111" strokeWidth="1.600" />
          <path d="M10.700 13.300L.5 23.500" stroke="#111" strokeWidth="1.600" />
        </Svg>
        <Label t="Type here to search" w={198} className="ml-[18px] mt-[3px] text-[21.500px]" />
      </div>
      <div className="flex w-[72px] items-center pl-[24px]">
        <div className="h-[23px] w-[23px] rounded-full border-[3px] border-white" />
      </div>
      <div className="flex w-[76px] items-center pl-[23px]">
        <Svg w={26} h={24}>
          <path d="M1.500 0v3.500h15V0M1.500 24v-3.500h15V24M1.500 6.500h15v11h-15zM23.500 0v6M23.500 11.500V24" stroke="#fff" strokeWidth="1.200" />
          <path d="M22 7h3v3h-3z" fill="#fff" />
        </Svg>
      </div>
      {apps.map((a, i) => (
        <div key={i} className={"flex w-[75px] flex-col items-center " + (a.on ? "bg-[#5a594f]" : "")}>
          <div className="flex h-[57px] items-center pr-[2px] pt-[3px]">{a.el}</div>
          <div className={"h-[3px] bg-[#76b9ed] " + (a.on ? "w-full" : "w-[61px]")} />
        </div>
      ))}
      <div className="flex items-center pl-[192px]">
        <Svg w={18} h={10} className="-mt-px">
          <path d="M1 9.500l8-8.500 8 8.500" stroke="#fff" strokeWidth="1.400" />
        </Svg>
        <Svg w={25} h={18} className="-mt-px ml-[15px]">
          <path d="M2 0v4M6 0v4" stroke="#fff" strokeWidth="1.300" />
          <path d="M.5 4h7v2.500L5.500 9h-3L.5 6.500zM4 9v7h3" stroke="#fff" strokeWidth="1.200" />
          <path d="M8.500 3.500h14v12.500H6V10" stroke="#fff" strokeWidth="1.200" />
          <path d="M9 5.500h12v8.500H8z" fill="#fff" />
          <path d="M24 7v5" stroke="#fff" strokeWidth="1.500" />
        </Svg>
        <Svg w={20} h={20} className="ml-[15px]">
          <path d="M1 19C1 9 9 1.500 19 1.500" stroke="#aaa" strokeWidth="1.300" />
          <path d="M5.500 19c0-7 6-13 13.500-13M9.500 19c0-5 4-9 9.500-9M13.500 19c0-3 2.500-5 5.500-5" stroke="#fff" strokeWidth="1.300" />
          <circle cx="17" cy="18" r="1.600" fill="#fff" />
        </Svg>
        <Svg w={23} h={20} className="ml-[13px]">
          <path d="M1 7h3l5-5v16l-5-5H1z" stroke="#fff" strokeWidth="1.300" />
          <path d="M12 7.500c1.300 1.500 1.300 3.500 0 5M15 5c2.500 3 2.500 7 0 10" stroke="#fff" strokeWidth="1.200" />
          <path d="M18 2.500c4 4.500 4 10.500 0 15" stroke="#999" strokeWidth="1.200" />
        </Svg>
        <Svg w={24} h={21} className="ml-[12px]">
          <path d="M6 0l6 3.800-6 3.800L0 3.800zM18 0l6 3.800-6 3.800-6-3.800zM6 8l6 3.800-6 3.800-6-3.800zM18 8l6 3.800-6 3.800-6-3.800zM12 13l6 3.800-6 3.800-6-3.800z" fill="#fff" />
        </Svg>
        <Svg w={24} h={17} className="ml-[12px]">
          <path d="M6 16.500a5.500 5.500 0 0 1-.6-11A7 7 0 0 1 18.700 6a5.300 5.300 0 0 1-.2 10.500z" fill="#fff" />
          <path d="M12 14V7M8.500 10L12 6.300 15.500 10" stroke="#2f2d22" strokeWidth="2.200" />
        </Svg>
        <div className="ml-[16px] mt-px flex w-[86px] flex-col items-center gap-[4px] text-[17px] leading-[24px]">
          <Label t="10:25 AM" w={76} />
          <Label t="5/28/2020" w={84} />
        </div>
        <Svg w={24} h={24} className="ml-[27px] mt-[3px]">
          <path d="M1 1h22v17h-8l-3.500 4.500L8 18H1z" stroke="#fff" strokeWidth="1.400" />
        </Svg>
      </div>
      <div className="ml-[30px] w-px bg-[#8a897f]" />
    </div>
  );
}

/* ---------- window ---------- */

export default function App() {
  return (
    <div className="relative flex h-[1080px] w-[1920px] flex-col overflow-hidden bg-[#efefef] font-['Open_Sans','Noto_Sans',sans-serif] text-[17px] leading-[24px]">
      <div className="flex h-[34px] shrink-0 items-center bg-white pl-[2px] text-black">
        <Qgis s={23} />
        <Label t="Map1" w={46} className="ml-[6px] mt-[2px]" />
        <div className="ml-auto flex gap-[53px] pr-[29px]">
          <Svg w={16} h={16} className="-translate-x-px"><path d="M0 8.500h16" stroke="#000" /></Svg>
          <Svg w={16} h={16} className="-translate-x-px">
            <path d="M.5 4.500h11v11H.5zM4 4V.5h11.500V12H12" stroke="#000" strokeWidth="1.100" />
          </Svg>
          <Svg w={16} h={16}><path d="M.5.5l15 15M15.500.5l-15 15" stroke="#000" strokeWidth="1.200" /></Svg>
        </div>
      </div>
      <div className="flex h-[30px] shrink-0 items-stretch border-b border-[#d5d5d5] bg-[#efefef] pl-[9px] text-black">
        <div className="flex w-[61px] items-center justify-center bg-[#0078d7] text-white shadow-[inset_0_0_0_1px_#0060b0]">
          <Label t="&Layout" w={53} className="mt-[3px]" />
        </div>
        <div className="flex items-center gap-[17px] pl-[13px] pt-[3px]">
          {menuBar.map(([t, w]) => (
            <Label key={t} t={t} w={w} />
          ))}
        </div>
      </div>
      <Toolbars />
      <div className="flex h-[839px] shrink-0">
        <LeftTools />
        <div className="w-[1478px] border-b border-l border-[#b4b4b4]">
          <div className="pl-[28px]"><TopRuler /></div>
          <div className="flex">
            <SideRuler />
            <Canvas />
          </div>
        </div>
        <div className="pl-[9px]"><RightPanel /></div>
      </div>
      <StatusBar />
      <TaskBar />
      <Menu />
    </div>
  );
}
